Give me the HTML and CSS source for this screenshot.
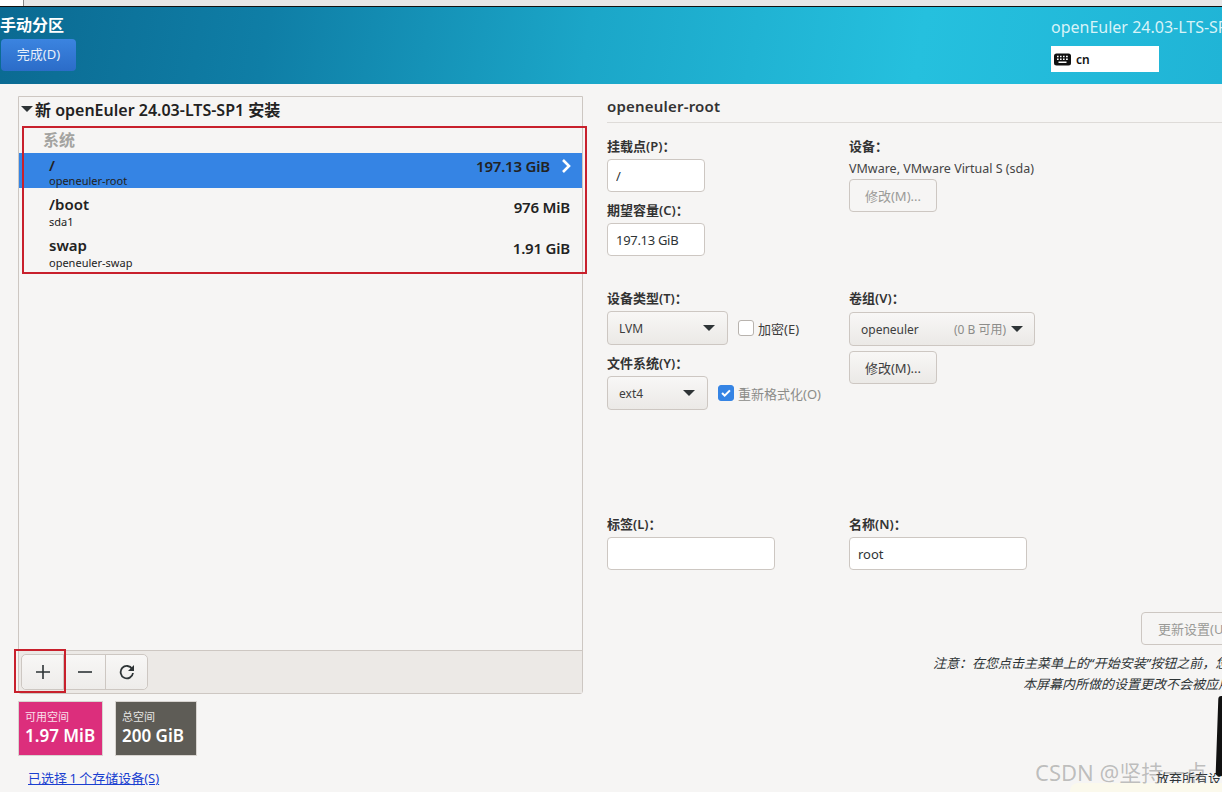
FILE: index.html
```html
<!DOCTYPE html>
<html lang="zh-CN">
<head>
    <meta charset="UTF-8">
    <meta name="viewport" content="width=device-width, initial-scale=1.0">
    <title>手动分区</title>
    <link rel="stylesheet" href="styles.css">
</head>
<body>
    <div class="top-strip"><div class="top-strip-left"></div></div>

    <header class="header">
        <div class="header-left">
            <div class="header-title">手动分区</div>
            <button class="done-button">完成(D)</button>
        </div>
        <div class="header-right">
            <div class="product">openEuler 24.03-LTS-SP1 安装</div>
            <div class="layout-box">
                <svg class="kb-icon" width="17" height="13" viewBox="0 0 17 13">
                    <rect x="0" y="0.5" width="17" height="12" rx="2.5" fill="#111"/>
                    <path d="M3 3.5h1.6M6 3.5h1.6M9 3.5h1.6M12 3.5h1.8M3 6.2h1.6M6 6.2h1.6M9 6.2h1.6M12 6.2h1.8M4.5 9.2h8" stroke="#fff" stroke-width="1.4" fill="none"/>
                </svg>
                <span>cn</span>
            </div>
        </div>
    </header>

    <main class="main">
        <section class="left">
            <div class="panel">
                <div class="panel-body">
                    <div class="tree-title"><span class="caret caret-dark"></span>新 openEuler 24.03-LTS-SP1 安装</div>
                    <div class="group-name">系统</div>
                    <div class="row row-selected">
                        <div class="row-main">
                            <div class="row-mount">/</div>
                            <div class="row-dev">openeuler-root</div>
                        </div>
                        <div class="row-size">197.13 GiB</div>
                        <svg class="chevron" width="10" height="16" viewBox="0 0 10 16">
                            <path d="M2 2l6 6-6 6" stroke="#fff" stroke-width="2.6" fill="none"/>
                        </svg>
                    </div>
                    <div class="row">
                        <div class="row-main">
                            <div class="row-mount">/boot</div>
                            <div class="row-dev">sda1</div>
                        </div>
                        <div class="row-size">976 MiB</div>
                    </div>
                    <div class="row">
                        <div class="row-main">
                            <div class="row-mount">swap</div>
                            <div class="row-dev">openeuler-swap</div>
                        </div>
                        <div class="row-size">1.91 GiB</div>
                    </div>
                </div>
                <div class="toolbar">
                    <div class="tool-group">
                        <button class="tool-button">
                            <svg width="16" height="16" viewBox="0 0 16 16"><path d="M8 1v14M1 8h14" stroke="#2e3436" stroke-width="1.6" fill="none"/></svg>
                        </button>
                        <button class="tool-button">
                            <svg width="16" height="16" viewBox="0 0 16 16"><path d="M1 8h14" stroke="#2e3436" stroke-width="1.6" fill="none"/></svg>
                        </button>
                        <button class="tool-button">
                            <svg width="16" height="16" viewBox="0 0 16 16">
                                <path d="M13.2 5A6.2 6.2 0 1 0 14 9" stroke="#2e3436" stroke-width="1.8" fill="none"/>
                                <path d="M15 1v6H9z" fill="#2e3436"/>
                            </svg>
                        </button>
                    </div>
                </div>
            </div>

            <div class="tiles">
                <div class="tile tile-free">
                    <div class="tile-label">可用空间</div>
                    <div class="tile-value">1.97 MiB</div>
                </div>
                <div class="tile tile-total">
                    <div class="tile-label">总空间</div>
                    <div class="tile-value">200 GiB</div>
                </div>
            </div>
            <a class="device-link" href="#">已选择 1 个存储设备(S)</a>
        </section>

        <section class="right">
            <h2 class="detail-title">openeuler-root</h2>

            <div class="form-cols form-top">
                <div class="col">
                    <label class="field-label">挂载点(P)：</label>
                    <input class="entry entry-small" type="text" value="/">
                    <label class="field-label field-label-next">期望容量(C)：</label>
                    <input class="entry entry-small" type="text" value="197.13 GiB">
                </div>
                <div class="col">
                    <label class="field-label">设备：</label>
                    <div class="device-name">VMware, VMware Virtual S (sda)</div>
                    <button class="btn btn-disabled">修改(M)...</button>
                </div>
            </div>

            <div class="form-cols form-middle">
                <div class="col">
                    <label class="field-label">设备类型(T)：</label>
                    <div class="inline-row">
                        <div class="combo combo-type">LVM<span class="caret"></span></div>
                        <span class="check-box"></span>
                        <span class="check-text">加密(E)</span>
                    </div>
                    <label class="field-label field-label-next2">文件系统(Y)：</label>
                    <div class="inline-row">
                        <div class="combo combo-fs">ext4<span class="caret"></span></div>
                        <span class="check-box check-on">
                            <svg width="16" height="16" viewBox="0 0 16 16"><path d="M3.5 8l3 3 6-6" stroke="#fff" stroke-width="2.4" fill="none"/></svg>
                        </span>
                        <span class="check-text check-text-dim">重新格式化(O)</span>
                    </div>
                </div>
                <div class="col">
                    <label class="field-label">卷组(V)：</label>
                    <div class="combo combo-vg">openeuler<span class="vg-free">(0 B 可用)</span><span class="caret"></span></div>
                    <button class="btn btn-vg">修改(M)...</button>
                </div>
            </div>

            <div class="form-cols form-bottom">
                <div class="col">
                    <label class="field-label">标签(L)：</label>
                    <input class="entry entry-label" type="text">
                </div>
                <div class="col">
                    <label class="field-label">名称(N)：</label>
                    <input class="entry entry-name" type="text" value="root">
                </div>
            </div>

            <button class="btn btn-disabled btn-update">更新设置(U)</button>
            <div class="note note-first">注意：在您点击主菜单上的“开始安装”按钮之前，您在本屏幕内所做的设置</div>
            <div class="note note-second">本屏幕内所做的设置更改不会被应用。</div>
        </section>
    </main>

    <!-- screenshot annotations and leftovers lying over the page -->
    <div class="mark mark-list"></div>
    <div class="mark mark-add"></div>
    <div class="discard">放弃所有设置</div>
    <div class="scribble"></div>
    <div class="corner-note"></div>
    <div class="watermark">CSDN @坚持一点</div>
</body>
</html>
```

FILE: styles.css
```css
* {
    box-sizing: border-box;
}
html, body {
    margin: 0;
    height: 792px;
    overflow: hidden;
}
body {
    position: relative;
    background-color: #f6f5f4;
    color: #2e3436;
    font-family: "Noto Sans", "Noto Sans CJK SC", sans-serif;
    font-size: 13px;
}
button, input {
    font-family: inherit;
    font-size: 13px;
    color: inherit;
}

/* top of the window behind */
.top-strip {
    height: 7px;
    background-color: #e6e6e6;
    border-bottom: 1px solid #111;
}
.top-strip-left {
    width: 24px;
    height: 6px;
    background-color: #fff;
    border-right: 1px solid #888;
}

/* header */
.header {
    display: flex;
    justify-content: space-between;
    height: 77px;
    background: linear-gradient(100deg, #0b6a92 0%, #0f7ea6 22%, #1ba6c8 48%, #25c0de 75%, #20b4d6 100%);
}
.header-left {
    padding: 8px 0 0 1px;
}
.header-title {
    margin-left: -1px;
    height: 24px;
    color: #fff;
    font-size: 16px;
    font-weight: 700;
    line-height: 21px;
}
.done-button {
    display: block;
    width: 75px;
    height: 32px;
    padding: 0 0 3px;
    color: #e8f0fa;
    background: linear-gradient(#3b84e0, #2b6cc8);
    border: none;
    border-radius: 4px;
}
.header-right {
    width: 171px;
    overflow: hidden;
    white-space: nowrap;
    padding-top: 9px;
}
.product {
    color: #d8f3f8;
    font-size: 16px;
    line-height: 22px;
}
.layout-box {
    display: flex;
    align-items: center;
    gap: 5px;
    width: 108px;
    height: 26px;
    margin-top: 8px;
    padding-left: 3px;
    background-color: #fff;
    color: #111;
    font-size: 12px;
    font-weight: 600;
}

/* main area */
.main {
    display: flex;
}
.left {
    width: 583px;
    padding: 12px 0 0 18px;
}
.panel {
    display: flex;
    flex-direction: column;
    height: 598px;
    border: 1px solid #cdc7c2;
    border-radius: 0 0 3px 3px;
}
.panel-body {
    flex: 1;
}
.tree-title {
    display: flex;
    align-items: center;
    height: 27px;
    padding: 0 0 4px 2px;
    color: #222;
    font-size: 16px;
    font-weight: 600;
}
.tree-title .caret {
    margin: 0 2px 0 0;
}
.group-name {
    height: 29px;
    padding: 5px 0 0 24px;
    color: #a3a3a0;
    font-size: 16px;
    font-weight: 600;
    line-height: 22px;
}
.row {
    display: flex;
    justify-content: space-between;
    align-items: center;
    height: 41px;
    padding: 0 12px 0 30px;
    color: #222;
}
.row-selected {
    height: 35px;
    padding-right: 11px;
    background-color: #3584e4;
}
.row-main {
    padding-top: 4px;
}
.row-selected .row-main {
    padding-top: 2px;
}
.row-mount {
    font-size: 15px;
    font-weight: 600;
    line-height: 22px;
}
.row-dev {
    font-size: 11px;
    line-height: 14px;
}
.row-selected .row-mount {
    line-height: 18px;
}
.row-selected .row-size {
    margin-left: auto;
    padding-bottom: 10px;
}
.row-size {
    padding-bottom: 4px;
    font-size: 15px;
    font-weight: 600;
    letter-spacing: -0.2px;
}
.chevron {
    margin: 0 0 10px 11px;
}
.toolbar {
    height: 43px;
    padding: 3px 0 0 2px;
    background-color: #ece9e6;
    border-top: 1px solid #cdc7c2;
}
.tool-group {
    display: inline-flex;
    height: 36px;
    background-color: #f6f5f4;
    border: 1px solid #cdc7c2;
    border-radius: 5px;
}
.tool-button {
    display: flex;
    align-items: center;
    justify-content: center;
    width: 42px;
    padding: 0;
    background: linear-gradient(#f8f7f6, #eeecea);
    border: none;
    border-right: 1px solid #cdc7c2;
}
.tool-button:first-child {
    border-radius: 5px 0 0 5px;
}
.tool-button:last-child {
    width: 41px;
    border-right: none;
    border-radius: 0 5px 5px 0;
}

/* space tiles */
.tiles {
    display: flex;
    gap: 12px;
    margin-top: 7px;
}
.tile {
    height: 55px;
    padding: 8px 0 0 6px;
    color: #fff;
    border: 1px solid #d8d4d0;
}
.tile-free {
    width: 85px;
    background-color: #dc2e7c;
}
.tile-total {
    width: 82px;
    background-color: #5e5c56;
}
.tile-label {
    font-size: 11px;
    line-height: 14px;
    opacity: 0.85;
}
.tile-value {
    font-size: 17px;
    font-weight: 600;
    line-height: 24px;
}
.device-link {
    display: block;
    margin: 13px 0 0 10px;
    color: #1a3fd0;
    font-size: 13px;
    line-height: 18px;
    word-spacing: -1px;
}

/* right side */
.right {
    flex: 1;
    min-width: 0;
    padding: 12px 0 0 24px;
}
.detail-title {
    height: 27px;
    margin: 0;
    color: #333;
    font-size: 15px;
    font-weight: 600;
    line-height: 21px;
    letter-spacing: 0.2px;
    border-bottom: 1px solid #dedbd8;
}
.form-cols {
    display: grid;
    grid-template-columns: 242px 1fr;
}
.form-top {
    height: 159px;
    padding-top: 13px;
}
.form-middle {
    height: 232px;
    padding-top: 6px;
}
.form-bottom {
    height: 98px;
}
.field-label {
    display: block;
    height: 23px;
    color: #333;
    font-size: 13px;
    font-weight: 600;
    line-height: 20px;
}
.field-label-next {
    margin-top: 8px;
}
.field-label-next2 {
    margin-top: 8px;
}
.entry {
    display: block;
    height: 33px;
    padding: 0 8px;
    background-color: #fff;
    border: 1px solid #cdc7c2;
    border-radius: 4px;
    outline: none;
    letter-spacing: -0.3px;
}
.entry-small {
    width: 98px;
}
.entry-label {
    width: 168px;
}
.entry-name {
    width: 178px;
    letter-spacing: 0;
}
.device-name {
    height: 14px;
    margin-top: 3px;
    color: #444;
    font-size: 12.5px;
    line-height: 14px;
    white-space: nowrap;
}
.btn {
    display: block;
    width: 88px;
    height: 33px;
    padding: 0;
    color: #3d3d3d;
    background: linear-gradient(#f8f7f6, #ebe9e6);
    border: 1px solid #cdc7c2;
    border-radius: 4px;
}
.btn-disabled {
    color: #9a9a97;
    background: #f6f5f4;
}
.col > .btn-disabled {
    margin-top: 3px;
}
.btn-vg {
    margin-top: 5px;
}
.inline-row {
    display: flex;
    align-items: center;
    height: 34px;
}
.combo {
    display: flex;
    align-items: center;
    justify-content: space-between;
    height: 34px;
    padding: 0 12px 0 11px;
    background: linear-gradient(#f8f7f6, #ebe9e6);
    border: 1px solid #cdc7c2;
    border-radius: 4px;
    color: #3d3d3d;
    font-size: 12px;
}
.combo-type {
    width: 121px;
}
.combo-fs {
    width: 101px;
}
.combo-vg {
    width: 186px;
    margin-top: 1px;
    padding-right: 11px;
}
.vg-free {
    margin-left: auto;
    margin-right: 5px;
    color: #8c8c89;
}
.caret {
    display: inline-block;
    width: 0;
    height: 0;
    border-left: 6px solid transparent;
    border-right: 6px solid transparent;
    border-top: 6px solid #2e3436;
}
.check-box {
    display: flex;
    align-items: center;
    justify-content: center;
    width: 16px;
    height: 16px;
    margin-left: 10px;
    background-color: #fff;
    border: 1px solid #b8b3ae;
    border-radius: 3px;
}
.check-on {
    background-color: #3584e4;
    border-color: #3584e4;
}
.check-text {
    margin-left: 4px;
    color: #3d3d3d;
    font-size: 13px;
}
.check-text-dim {
    color: #8c8c89;
}
.btn-update {
    width: 120px;
    margin-left: 534px;
    white-space: nowrap;
    text-align: left;
    padding-left: 16px;
}
.col > .btn-update {
    margin-top: 0;
}
.note {
    font-size: 13px;
    font-style: italic;
    line-height: 21px;
    white-space: nowrap;
}
.note-first {
    margin: 8px 0 0 326px;
}
.note-second {
    margin-left: 416px;
}

/* things over the page */
.mark {
    position: absolute;
    border: 2px solid #c8202c;
}
.mark-list {
    left: 22px;
    top: 126px;
    width: 565px;
    height: 148px;
}
.mark-add {
    left: 14px;
    top: 649px;
    width: 52px;
    height: 44px;
}
.discard {
    position: absolute;
    left: 1156px;
    top: 769px;
    font-size: 13px;
    line-height: 18px;
    white-space: nowrap;
}
.scribble {
    position: absolute;
    left: 1217px;
    top: 696px;
    width: 8px;
    height: 80px;
    background-color: #111;
    border-radius: 3px;
    transform: rotate(2deg);
}
.corner-note {
    position: absolute;
    left: 1070px;
    top: 783px;
    width: 170px;
    height: 30px;
    background-color: #fbf9ec;
    border-radius: 8px;
}
.watermark {
    position: absolute;
    left: 1035px;
    top: 756px;
    color: rgba(120, 120, 120, 0.45);
    font-size: 22px;
    line-height: 32px;
    white-space: nowrap;
}
```
